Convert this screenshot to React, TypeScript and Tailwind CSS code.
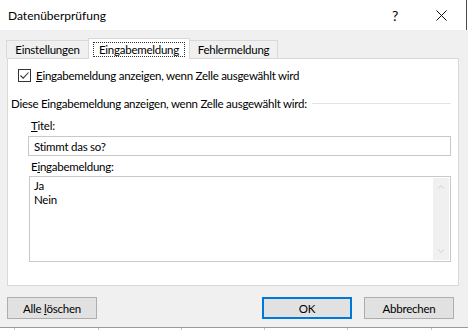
import { ChevronDown, ChevronUp } from "lucide-react";

function Check() {
  return (
    <div className="w-[13px] h-[13px] border border-[#333333] bg-white flex items-center justify-center">
      <svg width="11" height="11" viewBox="0 0 11 11">
        <path d="M1.5 5.5 L4.2 8.2 L9.5 2.5" fill="none" stroke="#333333" strokeWidth="1.1" />
      </svg>
    </div>
  );
}

function Tab({ label, active, w }: { label: string; active?: boolean; w: string }) {
  if (active) {
    return (
      <div className={w + " h-[21px] -mb-px z-10 bg-white border border-b-0 border-[#d9d9d9] px-[4px] pt-[3px] flex justify-center items-start"}>
        <div className="flex-1 text-center border border-dotted border-[#333333] h-[15px] leading-[13px]">{label}</div>
      </div>
    );
  }
  return (
    <div className={w + " h-[18px] border border-b-0 border-[#d9d9d9] bg-[#f0f0f0] text-center leading-[17px]"}>{label}</div>
  );
}

function Button({ children, primary }: { children: React.ReactNode; primary?: boolean }) {
  return (
    <div
      className={
        "w-[90px] h-[22px] flex items-center justify-center bg-[#e1e1e1] " +
        (primary ? "border-2 border-[#0078d7]" : "border border-[#adadad]")
      }
    >
      {children}
    </div>
  );
}

export default function App() {
  const cols = [84, 83, 83, 83, 84];
  return (
    <div
      className="w-[468px] h-[330px] overflow-hidden flex flex-col text-[11.5px] tracking-[-0.25px] leading-[15px] text-black bg-[#f0f0f0]"
      style={{ fontFamily: 'Lato, "Noto Sans", sans-serif' }}
    >
      {/* title bar */}
      <div className="h-[30px] flex shrink-0">
        <div className="flex-1 bg-white flex items-center">
          <span className="pl-[8px] text-[12px] tracking-normal flex-1">Datenüberprüfung</span>
          <span className="text-[14px] mr-[38px]">?</span>
          <svg width="11" height="11" viewBox="0 0 11 11" className="mr-[19px]">
            <path d="M0.5 0.5 L10.5 10.5 M10.5 0.5 L0.5 10.5" stroke="#111" strokeWidth="1" />
          </svg>
        </div>
        <div className="w-px bg-[#4a4a4a]" />
        <div className="w-px bg-white" />
      </div>

      <div className="flex-1 flex flex-col px-[7px] pt-[7px]">
        {/* tabs */}
        <div className="flex items-end -ml-px h-[21px]">
          <Tab label="Einstellungen" w="w-[83px]" />
          <Tab label="Eingabemeldung" w="w-[102px] -ml-px" active />
          <Tab label="Fehlermeldung" w="w-[89px] -ml-px" />
        </div>

        {/* panel */}
        <div className="w-[452px] h-[228px] bg-white border border-[#d9d9d9] flex flex-col">
          <div className="flex items-center mt-[9px] ml-[10px] gap-[5px] h-[15px]">
            <Check />
            <span>
              <span className="underline">E</span>ingabemeldung anzeigen, wenn Zelle ausgewählt wird
            </span>
          </div>

          <div className="flex items-center mt-[13px] ml-[3px] mr-[7px] h-[15px]">
            <span>Diese Eingabemeldung anzeigen, wenn Zelle ausgewählt wird:</span>
            <div className="flex-1 h-px bg-[#e3e3e3] ml-[5px]" />
          </div>

          <div className="ml-[23px] mt-[7px] h-[15px]">
            <span className="underline">T</span>itel:
          </div>
          <div className="ml-[20px] mr-[7px] mt-[3px] h-[20px] border border-[#c9c9c9] flex items-center px-[5px]">
            Stimmt das so?
          </div>

          <div className="ml-[23px] mt-[3px] h-[15px]">
            E<span className="underline">i</span>ngabemeldung:
          </div>
          <div className="ml-[21px] mr-[7px] mt-[2px] h-[86px] border border-[#c9c9c9] flex">
            <div className="flex-1 pl-[4px] pt-[2px] leading-[14px]">
              <div>Ja</div>
              <div>Nein</div>
            </div>
            <div className="w-[16px] my-px mr-px bg-[#f0f0f0] flex flex-col items-center justify-between py-[3px]">
              <ChevronUp size={12} strokeWidth={1.2} color="#bdbdbd" />
              <ChevronDown size={12} strokeWidth={1.2} color="#bdbdbd" />
            </div>
          </div>
        </div>

        {/* buttons */}
        <div className="flex mt-[11px]">
          <Button>
            <span>
              Alle <span className="underline">l</span>öschen
            </span>
          </Button>
          <div className="flex-1" />
          <Button primary>OK</Button>
          <div className="w-[12px]" />
          <Button>Abbrechen</Button>
          <div className="w-[7px]" />
        </div>
      </div>

      {/* sheet grid peeking below */}
      <div className="h-[3px] shrink-0 border-t border-[#9a9a9a] bg-white flex">
        <div className="w-[15px] border-r border-[#c6c6c6]" />
        {cols.map((w, i) => (
          <div key={i} className="border-r border-[#c6c6c6]" style={{ width: w }} />
        ))}
      </div>
    </div>
  );
}
